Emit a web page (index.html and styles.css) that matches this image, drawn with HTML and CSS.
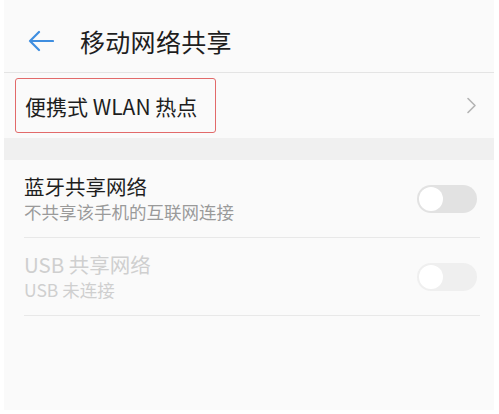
FILE: index.html
```html
<!DOCTYPE html>
<html lang="zh-CN">
<head>
<meta charset="utf-8">
<link rel="stylesheet" href="styles.css">
</head>
<body>
<div class="panel">
  <header class="header">
    <svg class="back" width="26" height="22" viewBox="0 0 26 22">
      <path d="M25 11H2M11 2L2 11l9 9" fill="none" stroke="#3f8ee0" stroke-width="2.2" stroke-linecap="round" stroke-linejoin="round"/>
    </svg>
    <h1 class="title">移动网络共享</h1>
  </header>
  <div class="row-wlan">
    <span class="wlan-label">便携式 WLAN 热点</span>
    <svg class="chev" width="11" height="17" viewBox="0 0 11 17">
      <path d="M2 1.5l7 7-7 7" fill="none" stroke="#b3b3b3" stroke-width="1.6" stroke-linecap="round" stroke-linejoin="round"/>
    </svg>
  </div>
  <div class="band"></div>
  <div class="list">
    <div class="item">
      <div class="texts">
        <div class="item-title">蓝牙共享网络</div>
        <div class="item-sub">不共享该手机的互联网连接</div>
      </div>
      <div class="toggle"><span class="knob"></span></div>
    </div>
    <div class="item disabled">
      <div class="texts">
        <div class="item-title">USB 共享网络</div>
        <div class="item-sub">USB 未连接</div>
      </div>
      <div class="toggle"><span class="knob"></span></div>
    </div>
  </div>
</div>
</body>
</html>
```
FILE: styles.css
```css
* { box-sizing: border-box; }
html, body { margin: 0; padding: 0; background: #ffffff; }
body {
  font-family: "Noto Sans CJK SC", "Noto Sans", sans-serif;
  width: 499px;
  height: 414px;
  overflow: hidden;
}
.panel {
  margin: 0 5px 0 4px;
  height: 410px;
  background: #fafafa;
}
.header {
  height: 73px;
  display: flex;
  align-items: center;
  padding-left: 24px;
  padding-top: 9px;
  border-bottom: 1px solid #e4e4e4;
}
.back { display: block; flex: none; }
.title {
  margin: 0 0 0 26px;
  font-size: 25px;
  font-weight: 400;
  color: #1e1e1e;
  letter-spacing: 0.3px;
}
.row-wlan {
  height: 65px;
  display: flex;
  align-items: center;
  justify-content: space-between;
  padding: 0 17px 0 11px;
}
.wlan-label {
  display: flex;
  align-items: center;
  height: 55px;
  width: 201px;
  padding-left: 9px;
  border: 1.5px solid #e26a6a;
  border-radius: 3px;
  font-size: 21px;
  color: #1e1e1e;
}
.chev { display: block; }
.band {
  height: 22px;
  background: #f0f0f0;
}
.list { padding: 0 14px 0 20px; }
.item {
  height: 78px;
  display: flex;
  align-items: center;
  justify-content: space-between;
  border-bottom: 1px solid #e8e8e8;
}
.texts { display: flex; flex-direction: column; }
.item-title {
  font-size: 20.5px;
  line-height: 27px;
  color: #1e1e1e;
}
.item-sub {
  font-size: 17.5px;
  line-height: 24px;
  color: #9a9a9a;
}
.toggle {
  width: 60px;
  height: 28px;
  border-radius: 14px;
  background: #e2e2e2;
  margin-right: 3px;
  display: flex;
  align-items: center;
  padding-left: 2px;
}
.knob {
  width: 24px;
  height: 24px;
  border-radius: 50%;
  background: #fff;
}
.disabled .item-title, .disabled .item-sub { color: #cfcfcf; }
.disabled .toggle { background: #efefef; }
```
